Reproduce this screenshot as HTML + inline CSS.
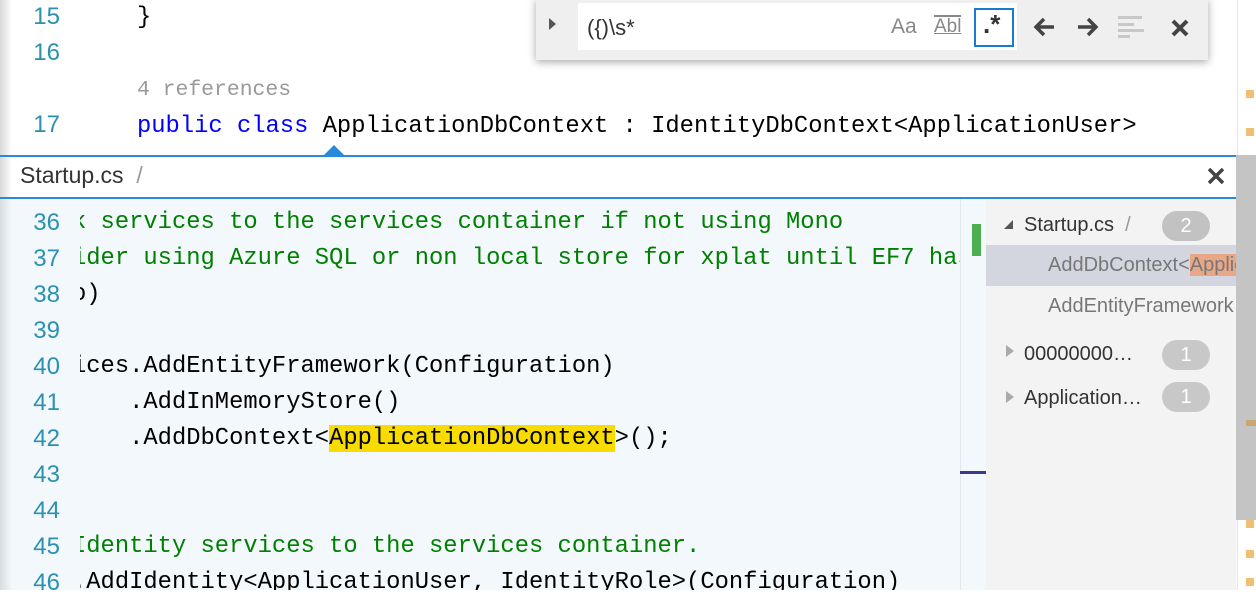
<!DOCTYPE html>
<html><head><meta charset="utf-8"><style>
*{margin:0;padding:0;box-sizing:border-box}
body{width:1256px;height:590px;overflow:hidden;background:#fff;position:relative;font-family:"Liberation Sans",sans-serif}
.mono{font-family:"Liberation Mono",monospace;font-size:23.8px;white-space:pre;position:absolute;line-height:36px}
.ln{position:absolute;left:0;width:60px;text-align:right;color:#2b91af;font-family:"Liberation Sans",sans-serif;font-size:24px;line-height:36px}
.kw{color:#0000ff}
.cm{color:#008000}
.abs{position:absolute}
</style></head><body>
<div class="abs" style="left:0;top:0;width:12px;height:590px;background:linear-gradient(90deg,#d8d8d8,#fff);"></div>
<div class="ln" style="top:-1px">15</div>
<div class="ln" style="top:35px">16</div>
<div class="ln" style="top:107px">17</div>
<div class="mono" style="left:137px;top:0px">}</div>
<div class="mono" style="left:137px;top:72px;font-size:21.4px;color:#999">4 references</div>
<div class="mono" style="left:137px;top:109px"><span class="kw">public</span> <span class="kw">class</span> ApplicationDbContext : IdentityDbContext&lt;ApplicationUser&gt;</div>
<div class="abs" style="left:1237px;top:0;width:1px;height:590px;background:#e5e5e5"></div>
<div class="abs" style="left:1246px;top:90px;width:8px;height:8px;background:#f0c070"></div>
<div class="abs" style="left:1246px;top:128px;width:8px;height:8px;background:#f0c070"></div>
<div class="abs" style="left:1246px;top:520px;width:8px;height:8px;background:#f0c070"></div>
<div class="abs" style="left:1246px;top:550px;width:8px;height:8px;background:#f0c070"></div>
<div class="abs" style="left:1246px;top:578px;width:8px;height:8px;background:#f0c070"></div>
<div class="abs" style="left:536px;top:-2px;width:672px;height:62px;background:#efefef;box-shadow:0 2px 8px rgba(0,0,0,.35)">
 <div class="abs" style="left:13px;top:20px;width:0;height:0;border-left:7px solid #555;border-top:6px solid transparent;border-bottom:6px solid transparent"></div>
 <div class="abs" style="left:42px;top:5px;width:439px;height:47px;background:#fff"></div>
 <div class="abs" style="left:51px;top:17px;font-size:22px;color:#333">({)\s*</div>
 <div class="abs" style="left:355px;top:17px;font-size:21px;color:#888">Aa</div>
 <div class="abs" style="left:398px;top:17px;font-size:19px;color:#888;text-decoration:underline;border-top:2px solid #888;line-height:20px">Abl</div>
 <div class="abs" style="left:438px;top:10px;width:40px;height:39px;border:2px solid #1a7ad0"></div>
 <div class="abs" style="left:447px;top:11px;font-size:26px;font-weight:bold;color:#333">.*</div>
 <svg class="abs" style="left:496px;top:16px" width="26" height="26" viewBox="0 0 26 26"><path d="M22 13H5M12 5L4 13l8 8" stroke="#444" stroke-width="3.5" fill="none"/></svg>
 <svg class="abs" style="left:538px;top:16px" width="26" height="26" viewBox="0 0 26 26"><path d="M4 13h17M14 5l8 8-8 8" stroke="#444" stroke-width="3.5" fill="none"/></svg>
 <svg class="abs" style="left:582px;top:18px" width="28" height="24"><rect x="0" y="0" width="24" height="3" fill="#c8c8c8"/><rect x="0" y="7" width="16" height="3" fill="#c8c8c8"/><rect x="0" y="13" width="26" height="3" fill="#c8c8c8"/><rect x="0" y="19" width="12" height="3" fill="#c8c8c8"/></svg>
 <svg class="abs" style="left:634px;top:20px" width="20" height="20"><path d="M3 3L17 17M17 3L3 17" stroke="#444" stroke-width="4"/></svg>
</div>
<div class="abs" style="left:0;top:155px;width:1236px;height:2px;background:#2b8ad8"></div>
<div class="abs" style="left:323px;top:145px;width:0;height:0;border-left:11px solid transparent;border-right:11px solid transparent;border-bottom:11px solid #2b8ad8"></div>
<div class="abs" style="left:20px;top:162px;font-size:23px;color:#333">Startup.cs <span style="color:#999">&nbsp;/</span></div>
<svg class="abs" style="left:1207px;top:167px" width="18" height="18"><path d="M2 2L16 16M16 2L2 16" stroke="#444" stroke-width="3.5"/></svg>
<div class="abs" style="left:0;top:197px;width:1236px;height:2px;background:#2b8ad8"></div>
<div class="abs" style="left:12px;top:199px;width:974px;height:391px;background:#f2f8fc"></div>
<div class="abs" style="left:0;top:199px;width:12px;height:391px;background:linear-gradient(90deg,#d8dde0,#f2f8fc)"></div>
<div class="ln" style="top:205px">36</div>
<div class="ln" style="top:241px">37</div>
<div class="ln" style="top:277px">38</div>
<div class="ln" style="top:313px">39</div>
<div class="ln" style="top:349px">40</div>
<div class="ln" style="top:385px">41</div>
<div class="ln" style="top:421px">42</div>
<div class="ln" style="top:457px">43</div>
<div class="ln" style="top:493px">44</div>
<div class="ln" style="top:529px">45</div>
<div class="ln" style="top:565px">46</div>
<div class="abs" style="left:80px;top:199px;width:880px;height:391px;overflow:hidden">
<div class="mono" style="left:-8px;top:6px"><span class="cm">k services to the services container if not using Mono</span>
<span class="cm">ider using Azure SQL or non local store for xplat until EF7 has f</span>
o)

ices.AddEntityFramework(Configuration)
    .AddInMemoryStore()
    .AddDbContext&lt;<span style="background:#f8dc00">ApplicationDbContext</span>&gt;();


<span class="cm">Identity services to the services container.</span>
.AddIdentity&lt;ApplicationUser, IdentityRole&gt;(Configuration)</div>
</div>
<div class="abs" style="left:960px;top:199px;width:1px;height:391px;background:#e0e8f0"></div>
<div class="abs" style="left:972px;top:224px;width:9px;height:32px;background:#4caf50"></div>
<div class="abs" style="left:960px;top:471px;width:26px;height:3px;background:#3a3a8a"></div>
<div class="abs" style="left:986px;top:199px;width:250px;height:391px;background:#f3f3f3;overflow:hidden;font-size:20px">
 <div class="abs" style="left:18px;top:21px;width:0;height:0;border-left:9px solid transparent;border-bottom:9px solid #555"></div>
 <div class="abs" style="left:38px;top:15px;color:#333">Startup.cs <span style="color:#999">&nbsp;/</span></div>
 <div class="abs" style="left:176px;top:12px;width:48px;height:30px;border-radius:15px;background:#c2c2c2;color:#fff;text-align:center;line-height:30px">2</div>
 <div class="abs" style="left:0;top:46px;width:250px;height:41px;background:#d3d6de"></div>
 <div class="abs" style="left:62px;top:55px;color:#777;white-space:nowrap">AddDbContext&lt;<span style="background:#e8a888">Application</span></div>
 <div class="abs" style="left:62px;top:96px;color:#777;white-space:nowrap">AddEntityFramework</div>
 <div class="abs" style="left:20px;top:146px;width:0;height:0;border-left:8px solid #aaa;border-top:6px solid transparent;border-bottom:6px solid transparent"></div>
 <div class="abs" style="left:38px;top:144px;color:#333">00000000…</div>
 <div class="abs" style="left:176px;top:141px;width:48px;height:30px;border-radius:15px;background:#c8c8c8;color:#fff;text-align:center;line-height:30px">1</div>
 <div class="abs" style="left:20px;top:192px;width:0;height:0;border-left:8px solid #aaa;border-top:6px solid transparent;border-bottom:6px solid transparent"></div>
 <div class="abs" style="left:38px;top:188px;color:#333">Application…</div>
 <div class="abs" style="left:176px;top:183px;width:48px;height:30px;border-radius:15px;background:#c8c8c8;color:#fff;text-align:center;line-height:30px">1</div>
</div>
<div class="abs" style="left:1236px;top:155px;width:20px;height:365px;background:#c4c4c4"></div>
<div class="abs" style="left:1246px;top:420px;width:10px;height:6px;background:#c8a870"></div>
</body></html>
